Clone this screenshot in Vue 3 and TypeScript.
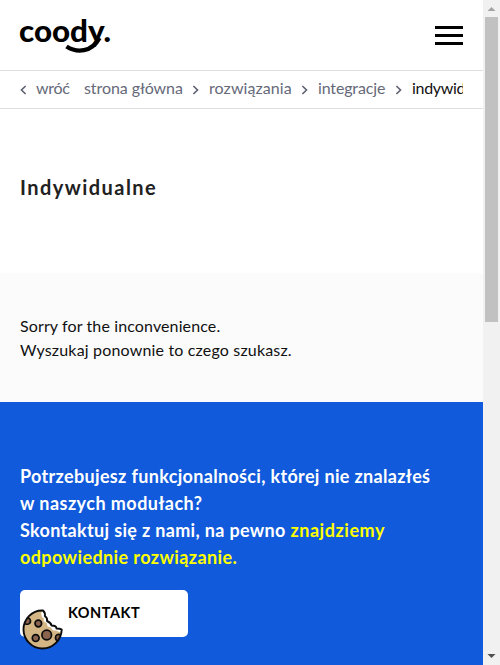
<script setup lang="ts">
interface Crumb {
  label: string
  cls: string
}

const crumbs: Crumb[] = [
  { label: 'strona główna', cls: 'home' },
  { label: 'rozwiązania', cls: 'solutions' },
  { label: 'integracje', cls: 'integrations' },
  { label: 'indywidualne', cls: 'current' },
]
</script>

<template>
  <div class="window">
    <div class="page">
      <header class="header">
        <svg class="logo" width="94" height="42" viewBox="-1 0 94 42" role="img" aria-label="coody.">
          <text class="logo-text" x="-1" y="25.500" textLength="92" lengthAdjust="spacingAndGlyphs">coody.</text>
          <path d="M46.500 30.500C57 37.200 71.500 36.500 79.500 22" fill="none" stroke="#000" stroke-width="4.400" />
        </svg>
        <button class="burger" aria-label="Menu"><i></i><i></i><i></i></button>
      </header>

      <nav class="crumbs">
        <div class="track">
          <svg class="chevron" width="7" height="10" viewBox="0 0 7 10"><path d="M5.600 1 1.500 5l4.100 4" /></svg>
          <a class="crumb back">wróć</a>
          <template v-for="(crumb, i) in crumbs" :key="crumb.label">
            <svg v-if="i > 0" class="chevron next" width="7" height="10" viewBox="0 0 7 10"><path d="m1.400 1 4.100 4-4.100 4" /></svg>
            <a class="crumb" :class="crumb.cls">{{ crumb.label }}</a>
          </template>
        </div>
      </nav>

      <section class="title"><h1>Indywidualne</h1></section>

      <section class="notice">
        <p class="sorry">Sorry for the inconvenience.</p>
        <p class="search">Wyszukaj ponownie to czego szukasz.</p>
      </section>

      <section class="cta">
        <h2>
          <span class="line l1">Potrzebujesz funkcjonalności, której nie znalazłeś</span>
          <span class="line l2">w naszych modułach?</span>
          <span class="line l3">Skontaktuj się z nami, na pewno <em>znajdziemy</em></span>
          <span class="line l4"><em>odpowiednie rozwiązanie.</em></span>
        </h2>
        <a class="button">KONTAKT</a>
      </section>

      <svg class="cookie" width="42" height="42" viewBox="0 0 42 42">
        <path
          d="M21 1.500C10 1 1.500 10 1.500 20.500A19 19 0 0 0 20.500 39.500C31 39.500 39.500 31 39.700 20.500C37 19.200 35 19 33 20C33 17.500 30 16.500 27.500 17C28 14.500 25 13 23.500 12.500C24.500 10 22 9 21.500 7.500C23 5.500 21.500 4 21 1.500Z"
          fill="#d3b683"
        />
        <path
          d="M21 2 19 4 20 8 22 9.500 21.500 12 25 14.500 25.500 17.500 29 18.500 31 21.500 34 21.500 38.500 23.500 39.500 20 34.500 19.500 32 17 29.500 16.500 27 13 25 12 24 9 22.800 7Z"
          fill="#fff"
        />
        <g fill="#8b6450" stroke="#0b0b0b" stroke-width="1.700">
          <path d="M6 8.500C9 10 9.500 14 6.500 15C4.500 15.500 3 15 2.500 14.500" />
          <circle cx="16.300" cy="14.500" r="3.300" />
          <circle cx="24.700" cy="26" r="4.800" />
          <circle cx="13.700" cy="29" r="3.400" />
          <path d="M38.500 26C36 24.500 33.500 26 33.500 28.500C33.500 30.500 34.500 31.500 36 32" />
        </g>
        <path
          d="M21 1.500C10 1 1.500 10 1.500 20.500A19 19 0 0 0 20.500 39.500C31 39.500 39.500 31 39.700 20.500C38 19.500 36.500 19.500 34.500 19.500C34.500 17 32 16.500 29.500 16.500C29 14 27.500 13 25 12C25.500 9.500 24.500 8 22.800 7C23.500 4.500 22.500 3 21 1.500Z"
          fill="none" stroke="#0b0b0b" stroke-width="1.900" stroke-linejoin="round"
        />
      </svg>
    </div>

    <div class="scrollbar">
      <svg width="17" height="17" viewBox="0 0 17 17"><path d="M4.500 11h8L8.500 7z" fill="#a3a3a3" /></svg>
      <div class="thumb"></div>
      <svg class="down" width="17" height="17" viewBox="0 0 17 17"><path d="M4.500 6h8l-4 4z" fill="#505050" /></svg>
    </div>
  </div>
</template>

<style>
body {
  overflow: hidden;
}
</style>

<style scoped>
.window {
  display: flex;
  width: 500px;
  height: 665px;
  overflow: hidden;
  background: #fff;
  color: #111;
  font-family: Lato, "Liberation Sans", sans-serif;
}
.page {
  position: relative;
  width: 483px;
  height: 665px;
  overflow: hidden;
}
.header {
  box-sizing: border-box;
  height: 71px;
  padding: 16px 20px 0 19px;
  border-bottom: 1px solid #dedede;
  display: flex;
  justify-content: space-between;
}
.logo {
  overflow: visible;
}
.logo-text {
  font: 900 31px Lato, sans-serif;
}
.burger {
  width: 28px;
  height: 19px;
  margin-top: 10px;
  padding: 0;
  border: 0;
  background: none;
  display: flex;
  flex-direction: column;
  gap: 5px;
}
.burger i {
  height: 3px;
  width: 28px;
  background: #000;
}
.crumbs {
  box-sizing: border-box;
  height: 38px;
  padding: 0 20px;
  border-bottom: 1px solid #dedede;
}
.track {
  display: flex;
  align-items: center;
  height: 33px;
  overflow: hidden;
  white-space: nowrap;
}
.chevron {
  flex: none;
  margin-top: 4px;
  fill: none;
  stroke: #5c6070;
  stroke-width: 1.6;
}
.crumb {
  flex: none;
  font-size: 16px;
  line-height: 24px;
  color: #656978;
}
.next {
  margin-right: 10px;
}
.back {
  width: 38px;
  margin: 0 10px 0 9px;
  letter-spacing: -0.3px;
}
.home {
  width: 108px;
  letter-spacing: -0.08px;
}
.solutions {
  width: 92px;
  letter-spacing: 0.08px;
}
.integrations {
  width: 77px;
  letter-spacing: -0.15px;
}
.current {
  color: #111;
  letter-spacing: -0.3px;
}
.title {
  box-sizing: border-box;
  height: 164px;
  padding: 63px 20px 0;
}
h1 {
  margin: 0;
  font-size: 20px;
  line-height: 30px;
  font-weight: 700;
  letter-spacing: 1.45px;
  color: #212121;
}
.notice {
  box-sizing: border-box;
  height: 129px;
  padding: 41px 20px 0;
  background: #fbfbfb;
}
.notice p {
  margin: 0;
  font-size: 16px;
  line-height: 24px;
  white-space: nowrap;
}
.sorry {
  letter-spacing: 0.12px;
}
.search {
  letter-spacing: 0.17px;
}
.cta {
  height: 263px;
  box-sizing: border-box;
  padding: 61px 20px 0;
  background: #105adb;
}
h2 {
  margin: 0 0 19px;
  font-size: 18px;
  line-height: 27px;
  font-weight: 700;
  color: #fff;
}
.line {
  display: block;
  white-space: nowrap;
}
.l1 {
  letter-spacing: 0.33px;
}
.l2 {
  letter-spacing: 0.45px;
}
.l3 {
  letter-spacing: 0.33px;
}
.l3 em {
  letter-spacing: 0.55px;
}
.l4 {
  letter-spacing: 0.4px;
}
em {
  font-style: normal;
  color: #ff0;
}
.button {
  box-sizing: border-box;
  display: flex;
  align-items: center;
  justify-content: center;
  width: 168px;
  height: 47px;
  padding-bottom: 2px;
  border-radius: 5px;
  background: #fff;
  color: #000;
  font-size: 14.5px;
  font-weight: 700;
  letter-spacing: 0.5px;
}
.cookie {
  position: absolute;
  left: 22px;
  top: 609px;
}
.scrollbar {
  width: 17px;
  height: 665px;
  background: #f1f1f1;
  display: flex;
  flex-direction: column;
  align-items: center;
}
.thumb {
  width: 13px;
  height: 305px;
  background: #c1c1c1;
}
.down {
  margin-top: auto;
}
</style>
